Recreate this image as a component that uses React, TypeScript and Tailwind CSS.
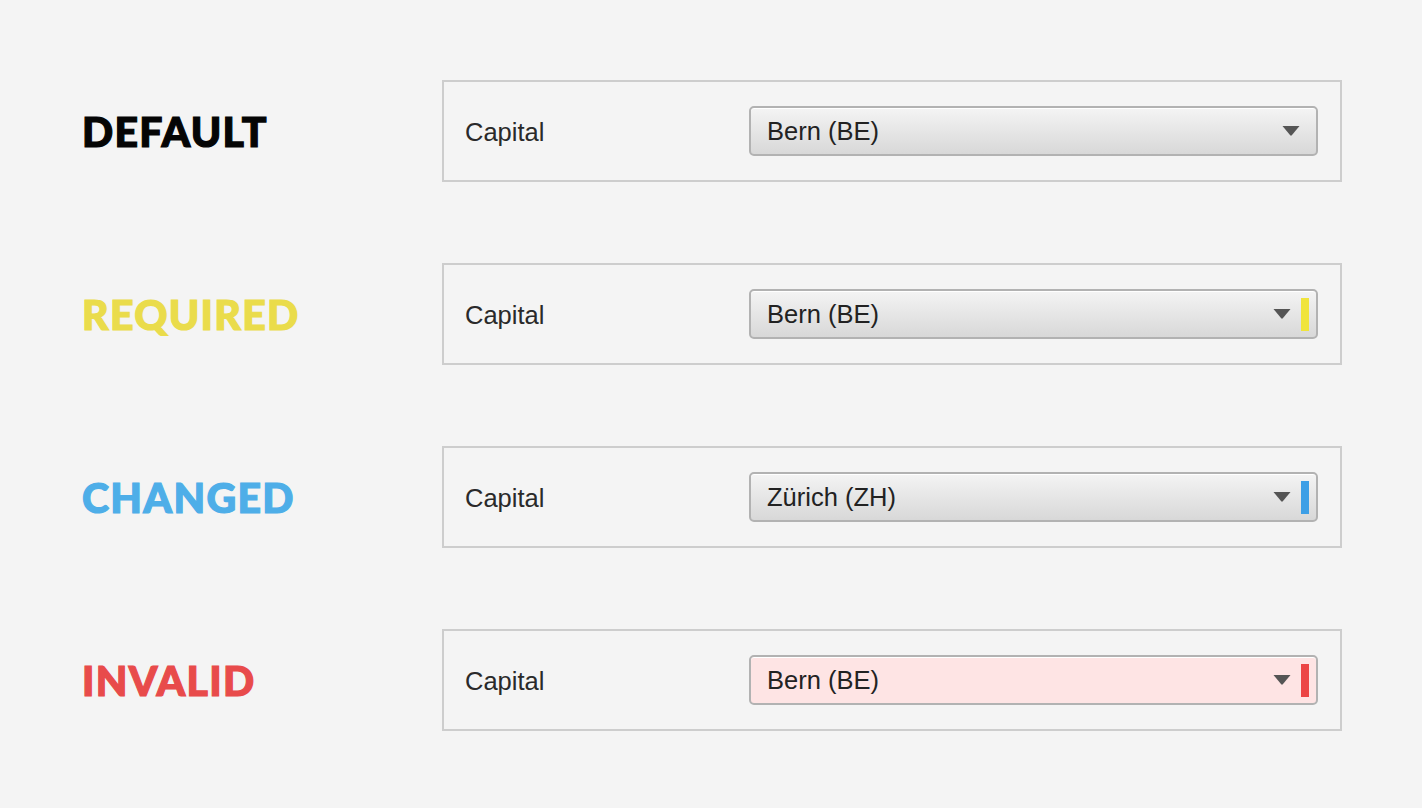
import React from 'react';

type Variant = 'default' | 'required' | 'changed' | 'invalid';

interface Row {
  title: string;
  variant: Variant;
  value: string;
}

const rows: Row[] = [
  { title: 'DEFAULT', variant: 'default', value: 'Bern (BE)' },
  { title: 'REQUIRED', variant: 'required', value: 'Bern (BE)' },
  { title: 'CHANGED', variant: 'changed', value: 'Zürich (ZH)' },
  { title: 'INVALID', variant: 'invalid', value: 'Bern (BE)' },
];

const titleColor: Record<Variant, string> = {
  default: 'text-[#050505]',
  required: 'text-[#eadc4b]',
  changed: 'text-[#4eaee8]',
  invalid: 'text-[#e84b4b]',
};

const barColor: Record<Variant, string> = {
  default: '',
  required: 'bg-[#f0e43c]',
  changed: 'bg-[#3d9fe6]',
  invalid: 'bg-[#ec4545]',
};

const SelectBox: React.FC<{ variant: Variant; value: string }> = ({ variant, value }) => {
  const bg =
    variant === 'invalid'
      ? 'bg-[#fee4e4]'
      : 'bg-gradient-to-b from-[#f4f4f4] to-[#d8d8d8]';
  const hasBar = variant !== 'default';
  return (
    <div
      className={`flex h-[50px] w-[569px] items-center rounded-[5px] border-2 border-[#b2b2b2] pl-[16px] ${hasBar ? 'pr-[7px]' : 'pr-[16px]'} ${bg} shadow-[inset_0_1px_0_#ffffff]`}
    >
      <span className="flex-1 pt-[1px] text-[25.5px] text-[#222]">{value}</span>
      <svg width="18" height="10" viewBox="0 0 18 10">
        <path d="M0.5 0 L17.5 0 L9.8 9.3 Q9 10 8.2 9.3 Z" fill="#555555" />
      </svg>
      {hasBar && <div className={`ml-[10px] h-[33px] w-[8px] ${barColor[variant]}`} />}
    </div>
  );
};

const App: React.FC = () => {
  return (
    <div
      className="flex min-h-[808px] w-full flex-col gap-[81px] bg-[#f4f4f4] pt-[80px]"
      style={{ fontFamily: '"Liberation Sans", Arial, sans-serif' }}
    >
      {rows.map((row) => (
        <div key={row.title} className="flex items-center">
          <div className="w-[442px] pl-[82px]">
            <h2
              className={`text-[41px] font-black leading-none tracking-[1.3px] [-webkit-text-stroke:1.2px_currentColor] ${titleColor[row.variant]}`}
              style={{ fontFamily: 'Lato, "DejaVu Sans", sans-serif' }}
            >
              {row.title}
            </h2>
          </div>
          <div className="flex h-[102px] w-[900px] items-center border-2 border-[#cdcdcd] pl-[21px]">
            <span className="w-[284px] pt-[3px] text-[25.5px] text-[#2a2a2a]">Capital</span>
            <SelectBox variant={row.variant} value={row.value} />
          </div>
        </div>
      ))}
    </div>
  );
};

export default App;
